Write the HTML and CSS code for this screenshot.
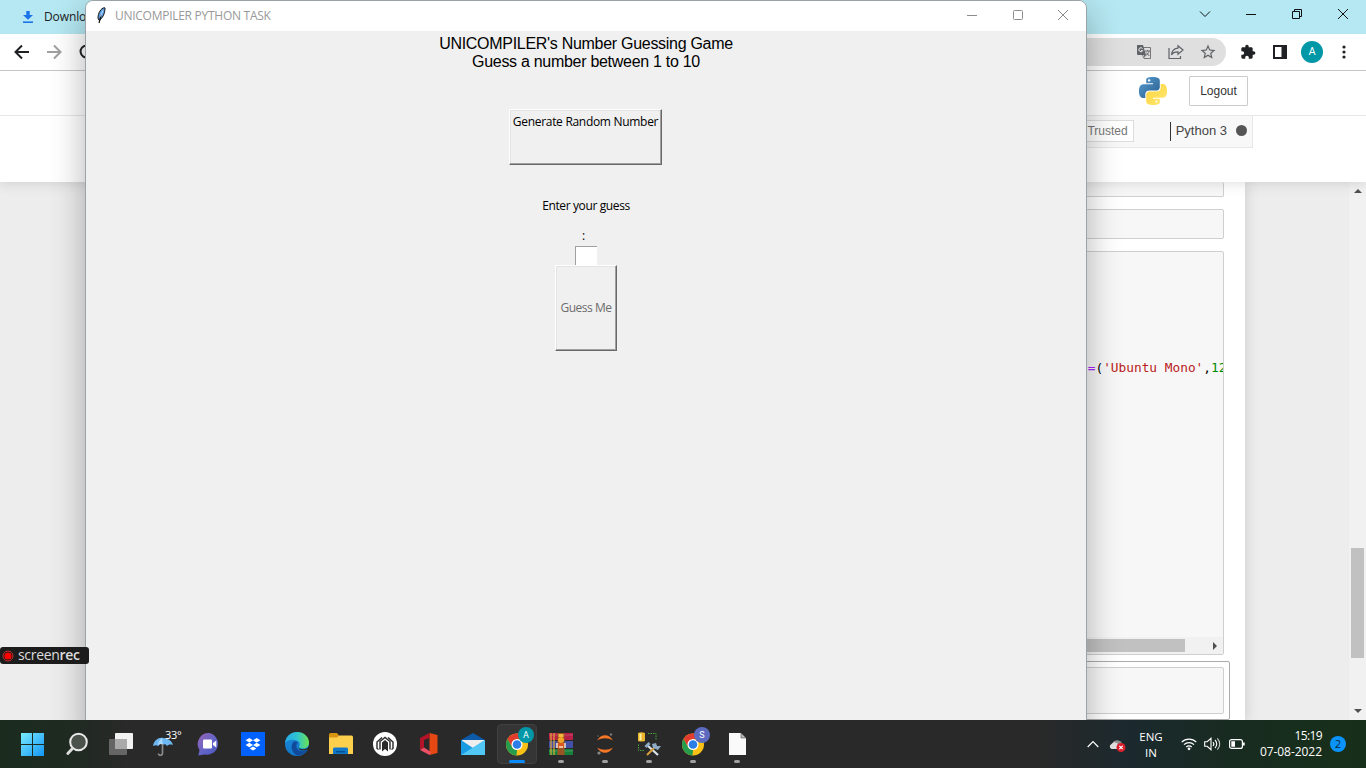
FILE: index.html
```html
<!DOCTYPE html>
<html lang="en">
<head>
<meta charset="utf-8">
<title>UNICOMPILER PYTHON TASK</title>
<link rel="stylesheet" href="styles.css">
</head>
<body>
<main class="desktop">
  <section class="browser">
    <header class="tabstrip">
      <div class="tab">
        <svg class="tab-icon" width="10" height="12" viewBox="0 0 10 12"><path d="M3.300 0h3.400v4H10L5 8.800 0 4h3.300z" fill="#1a73e8"/><path d="M0 10.400h10V12H0z" fill="#1a73e8"/></svg>
        <span class="tab-title">Downloads</span>
      </div>
      <div class="window-controls">
        <svg width="12" height="12" viewBox="0 0 12 12"><path d="M1 3.500l5 5 5-5" class="line"/></svg>
        <svg width="12" height="12" viewBox="0 0 12 12"><path d="M1 6.500h10" class="line"/></svg>
        <svg width="12" height="12" viewBox="0 0 12 12"><path d="M1.500 3.500h7v7h-7zM3.500 3.500v-2h7v7h-2" class="line"/></svg>
        <svg width="12" height="12" viewBox="0 0 12 12"><path d="M1 1l10 10M11 1L1 11" class="line"/></svg>
      </div>
    </header>
    <nav class="toolbar">
      <div class="nav-buttons">
        <svg width="20" height="20" viewBox="0 0 20 20"><path d="M17 10H4M10 3.500L3.500 10l6.500 6.500" fill="none" stroke="#202124" stroke-width="2"/></svg>
        <svg width="20" height="20" viewBox="0 0 20 20"><path d="M3 10h13M10 3.500L16.500 10 10 16.500" fill="none" stroke="#a0a0a2" stroke-width="2"/></svg>
        <svg width="20" height="20" viewBox="0 0 20 20"><path d="M15 5.500A6 6 0 1 0 16 12" fill="none" stroke="#202124" stroke-width="2"/></svg>
      </div>
      <div class="omnibox">
        <svg width="16" height="16" viewBox="0 0 16 16"><path d="M7 3.500h7.500v11H8L6.500 11" fill="none" stroke="#777" /><path d="M1 1h6l3 10H2a1 1 0 0 1-1-1z" fill="#5f6368"/><path d="M6.500 4.600a2 2 0 1 0 .2 2H5" fill="none" stroke="#eee"/><path d="M9 7h5M11.500 6v1M13 7c0 2-2 4-3 4M10.300 8.500l3 3.500" fill="none" stroke="#666"/><path d="M8 11l2 0-1.500 3z" fill="#5f6368"/></svg>
        <svg width="16" height="16" viewBox="0 0 16 16"><path d="M1 4v10.500h11.500V12" fill="none" stroke="#5f6368" stroke-width="1.200"/><path d="M10 1.800l5 4.200-5 4.200V7.800C7 7.700 5 8.500 3.500 10.800 4 7 6 4.500 10 4.200z" fill="none" stroke="#5f6368" stroke-width="1.200"/></svg>
        <svg width="18" height="18" viewBox="0 0 24 24"><path fill="#5f6368" d="M22 9.240l-7.190-.62L12 2 9.190 8.630 2 9.240l5.460 4.730L5.820 21 12 17.270 18.180 21l-1.630-7.030L22 9.240zM12 15.400l-3.760 2.270 1-4.280-3.320-2.880 4.380-.38L12 6.100l1.710 4.040 4.380.38-3.320 2.880 1 4.280L12 15.400z"/></svg>
      </div>
      <div class="extensions">
        <svg width="16" height="16" viewBox="0 0 24 24"><path fill="#202124" d="M20.500 11H19V7c0-1.100-.9-2-2-2h-4V3.500C13 2.120 11.880 1 10.500 1S8 2.120 8 3.500V5H4c-1.100 0-1.990.9-1.990 2v3.800H3.500c1.490 0 2.700 1.210 2.700 2.700s-1.210 2.700-2.700 2.700H2V20c0 1.100.9 2 2 2h3.800v-1.500c0-1.490 1.210-2.700 2.700-2.700 1.490 0 2.700 1.210 2.700 2.700V22H17c1.100 0 2-.9 2-2v-4h1.500c1.380 0 2.500-1.120 2.500-2.500S21.880 11 20.500 11z"/></svg>
        <svg width="16" height="16" viewBox="0 0 16 16"><path d="M2 2h12v12H2z" fill="#fff" stroke="#202124" stroke-width="2"/><path d="M9.500 2H14v12H9.500z" fill="#202124"/></svg>
        <span class="avatar">A</span>
        <svg width="4" height="16" viewBox="0 0 4 16"><g fill="#202124"><circle cx="2" cy="3" r="1.600"/><circle cx="2" cy="8" r="1.600"/><circle cx="2" cy="13" r="1.600"/></g></svg>
      </div>
    </nav>
    <div class="jupyter-head">
      <svg width="28" height="28" viewBox="0 0 24 24">
        <defs><linearGradient id="pyb" x2="1" y2="1"><stop stop-color="#5a9fd4"/><stop offset=".8" stop-color="#306998"/></linearGradient><linearGradient id="pyy" x2="1" y2="1"><stop stop-color="#ffd43b"/><stop offset="1" stop-color="#ffe873"/></linearGradient></defs>
        <path fill="url(#pyb)" d="M14.250.18l.9.2.73.26.59.3.45.32.34.34.25.34.16.33.1.3.04.26.02.2-.01.13V8.500l-.05.63-.13.55-.21.46-.26.38-.3.31-.33.25-.35.19-.35.14-.33.1-.3.07-.26.04-.21.02H8.770l-.69.05-.59.14-.5.22-.41.27-.33.32-.27.35-.2.36-.15.37-.1.35-.07.32-.04.27-.02.21v3.060H3.170l-.21-.03-.28-.07-.32-.12-.35-.18-.36-.26-.36-.36-.35-.46-.32-.59-.28-.73-.21-.88-.14-1.050-.05-1.230.06-1.220.16-1.040.24-.87.32-.71.36-.57.4-.44.42-.33.42-.24.4-.16.36-.1.32-.05.24-.01h.16l.06.01h8.160v-.83H6.180l-.01-2.750-.02-.37.05-.34.11-.31.17-.28.25-.26.31-.23.38-.2.44-.18.51-.15.58-.12.64-.1.71-.06.77-.04.84-.02 1.270.05zm-6.300 1.980l-.23.33-.08.41.08.41.23.34.33.22.41.09.41-.09.33-.22.23-.34.08-.41-.08-.41-.23-.33-.33-.22-.41-.09-.41.09z"/>
        <path fill="url(#pyy)" d="M21.040 6.110l.28.06.32.12.35.18.36.27.36.35.35.47.32.59.28.73.21.88.14 1.040.05 1.230-.06 1.230-.16 1.040-.24.86-.32.71-.36.57-.4.45-.42.33-.42.24-.4.16-.36.09-.32.05-.24.02-.16-.01h-8.220v.82h5.840l.01 2.760.02.36-.05.34-.11.31-.17.29-.25.25-.31.24-.38.2-.44.17-.51.15-.58.13-.64.09-.71.07-.77.04-.84.01-1.270-.04-1.070-.14-.9-.2-.73-.25-.59-.3-.45-.33-.34-.34-.25-.34-.16-.33-.1-.3-.04-.25-.02-.2.01-.13v-5.340l.05-.64.13-.54.21-.46.26-.38.3-.32.33-.24.35-.2.35-.14.33-.1.3-.06.26-.04.21-.02.13-.01h5.840l.69-.05.59-.14.5-.21.41-.28.33-.32.27-.35.2-.36.15-.36.1-.35.07-.32.04-.28.02-.21V6.070h2.090l.14.01z"/>
        <circle cx="15" cy="21" r="1" fill="#fff8d8"/>
      </svg>
      <button class="logout">Logout</button>
    </div>
    <div class="jupyter-menu">
      <div class="menu-inner">
        <span class="trusted">Trusted</span>
        <span class="kernel">Python 3</span>
        <i class="kernel-dot"></i>
      </div>
    </div>
    <div class="page">
      <div class="notebook">
        <div class="cell cell-a"></div>
        <div class="cell cell-b"></div>
        <div class="cell cell-c">
          <pre class="code"><span class="op">t=</span>(<span class="str">'Ubuntu Mono'</span>,<span class="num">12</span></pre>
          <div class="hscroll"><i class="hthumb"></i><svg width="4" height="8" viewBox="0 0 4 8"><path d="M0 0l4 4-4 4z" fill="#505050"/></svg></div>
        </div>
        <div class="selected"><div class="cell cell-d"></div></div>
      </div>
      <div class="vscroll">
        <svg width="8" height="4" viewBox="0 0 8 4"><path d="M0 4l4-4 4 4z" fill="#505050"/></svg>
        <i class="vthumb"></i>
        <svg width="8" height="4" viewBox="0 0 8 4"><path d="M0 0l4 4 4-4z" fill="#505050"/></svg>
      </div>
    </div>
  </section>

  <section class="tk">
    <header class="tk-title">
      <svg width="11" height="17" viewBox="0 0 11 17"><path d="M8.500.7C5 1 2 6 2 11l1 2.300C6 12 9 7 9 1z" fill="#5b9be0" stroke="#111" stroke-width="1"/><path d="M5.500 7L3 16" stroke="#111" stroke-width="1.200"/><path d="M7 3.500L4.500 9.500" stroke="#a9d2fa" stroke-width="1.200"/></svg>
      <span class="tk-name">UNICOMPILER PYTHON TASK</span>
      <div class="tk-controls">
        <svg width="12" height="12" viewBox="0 0 12 12"><path d="M1 6.500h10" class="grey"/></svg>
        <svg width="12" height="12" viewBox="0 0 12 12"><rect x="1.500" y="1.500" width="9" height="9" rx="1" class="grey"/></svg>
        <svg width="12" height="12" viewBox="0 0 12 12"><path d="M1 1l10 10M11 1L1 11" class="grey"/></svg>
      </div>
    </header>
    <div class="tk-body">
      <h1 class="heading">UNICOMPILER's Number Guessing Game<br>Guess a number between 1 to 10</h1>
      <button class="raised generate">Generate Random Number</button>
      <label class="label" for="guess">Enter your guess</label>
      <span class="colon">:</span>
      <input class="entry" id="guess">
      <button class="raised guess" disabled>Guess Me</button>
    </div>
  </section>

  <div class="screenrec">
    <svg width="12" height="12" viewBox="0 0 12 12"><circle cx="6" cy="6" r="5" fill="none" stroke="#e33" stroke-width=".8"/><circle cx="6" cy="6" r="3.600" fill="#f00"/></svg>
    <span class="rec-text">screen<b>rec</b></span>
  </div>
</main>

<footer class="taskbar">
  <div class="apps">
    <div class="app"><svg width="24" height="24" viewBox="0 0 24 24"><defs><linearGradient id="win" x2="1" y2="1" gradientUnits="userSpaceOnUse" x1="0" y1="0" gradientTransform="scale(24)"><stop stop-color="#7beefc"/><stop offset="1" stop-color="#1194f6"/></linearGradient></defs><path fill="url(#win)" d="M0 1h11v11H0zM12 1h11v11H12zM0 13h11v11H0zM12 13h11v11H12z"/></svg></div>
    <div class="app"><svg width="24" height="24" viewBox="0 0 24 24"><circle cx="13.500" cy="10" r="8.300" fill="#4b524c" stroke="#e9e9e9" stroke-width="2"/><path d="M7.500 16.500L2.800 21.500" stroke="#ddd" stroke-width="2.800" stroke-linecap="round"/></svg></div>
    <div class="app"><svg width="24" height="24" viewBox="0 0 24 24"><rect x="6" y="1" width="18" height="16" rx="1" fill="#f1f1f1"/><rect y="7" width="18" height="16" rx="1" fill="#656565"/><path d="M6 7h12v10H6z" fill="#aaa"/></svg></div>
    <div class="app"><svg width="24" height="24" viewBox="0 0 24 24"><path d="M0 14C1 8 6 5 10 6c5 0 9 3 10 7-3-1-5 0-6 1-1-2-3-2-4-1-2-2-4-1-5 1-1-1-3-1-5 0z" fill="#6db8f4"/><path d="M9 6c-3 2-4 5-4 8 1-2 3-3 5-1z" fill="#a9d8ff"/><path d="M9.500 12v9c0 3-4 3-4 .5" fill="none" stroke="#8b8b8b" stroke-width="1.700"/></svg><span class="temp">33°</span></div>
    <div class="app"><svg width="24" height="24" viewBox="0 0 24 24"><defs><linearGradient id="chat" x2="1" y2="1"><stop stop-color="#9a62b4"/><stop offset=".55" stop-color="#6264c7"/><stop offset="1" stop-color="#4b55be"/></linearGradient></defs><path d="M12.500 1a11 11 0 1 1-5 21.500L1.300 23.500 2.500 18A11 11 0 0 1 12.500 1z" fill="url(#chat)"/><rect x="6" y="7.500" width="9" height="9" rx="1" fill="#fff"/><path d="M16 11l3.300-2.500v7L16 13z" fill="#fff"/></svg></div>
    <div class="app"><svg width="24" height="24" viewBox="0 0 24 24"><path d="M0 0h24v24H0z" fill="#0061fe"/><path fill="#fff" d="M8.300 6l3.700 2.300-3.700 2.300-3.700-2.300zM15.700 6l3.700 2.300-3.700 2.300L12 8.300zM8.300 10.700L12 13l-3.700 2.300L4.600 13zM15.700 10.700l3.700 2.300-3.700 2.300L12 13zM12 14.500l3.300 2-3.300 2.100-3.300-2.100z"/></svg></div>
    <div class="app"><svg width="24" height="24" viewBox="0 0 24 24"><defs><linearGradient id="e1" x2="1"><stop stop-color="#28a9e8"/><stop offset=".5" stop-color="#2ec4d0"/><stop offset="1" stop-color="#6be352"/></linearGradient><linearGradient id="e2" y2="1" x2="0"><stop stop-color="#1b8ad8"/><stop offset="1" stop-color="#1277c9"/></linearGradient></defs><circle cx="12" cy="12" r="12" fill="url(#e2)"/><path d="M0 11C1 4 6 0 12 0c7 0 12 5 12 10.500 0 4-3 6-6 6s-4.500-1-4-2c2-3 0-6-4-6.500C6 7.500 2 8 0 11z" fill="url(#e1)"/><path d="M9 9.500c-4 3-3 11 3 14 4 0 8-2 10.500-5.500-6 3-12 0-11-5 .2-1.400 1-2 1.300-2.500-.8-.8-2.300-1.200-3.800-1z" fill="#114a9b"/><path d="M14 14.500c-1 2 2 4 8.500 1.700L24 14v5l-1.500-1.200c-5 2-10 0-8.500-3.300z" fill="#292929"/></svg></div>
    <div class="app"><svg width="24" height="24" viewBox="0 0 24 24"><path d="M0 2.500Q0 1 1.500 1H8l2 2.500V8H0z" fill="#d99410"/><path d="M0 5.500h8L10 3.500h12.500Q24 3.500 24 5v17H0z" fill="#fcd04c"/><path d="M4 22v-5q0-1.500 1.500-1.500h12q1.500 0 1.500 1.500v5z" fill="#1078c8"/><path d="M7 19h9v1.500H7z" fill="#064f91"/></svg></div>
    <div class="app"><svg width="24" height="24" viewBox="0 0 24 24"><circle cx="12" cy="12" r="12" fill="#fff"/><path d="M5.500 17.500l-1.500-1V10L9 5.500M15 5.500l5 4.500v6.500l-1.500 1" fill="none" stroke="#292929" stroke-width="1.400"/><path d="M7 17.500V9.500L12 5.500l5 4v8" fill="none" stroke="#292929" stroke-width="1.400"/><path d="M9 10.500L12 8l3 2.500V19.500L12 17l-3 2.500z" fill="#292929"/></svg></div>
    <div class="app"><svg width="24" height="24" viewBox="0 0 24 24"><path d="M12.500 1L20.500 3v18l-8 2z" fill="#e54812"/><path d="M12.500 1L3 6v12l4-2.500V8l5.500-2z" fill="#b31326"/><path d="M3 18l4-2.500 7 4.500-1.500 3z" fill="#ed4f67"/></svg></div>
    <div class="app"><svg width="24" height="24" viewBox="0 0 24 24"><path d="M0 8l12-7 12 7v5H0z" fill="#0c5aa8"/><path d="M1 8h22v6l-11 5L1 14z" fill="#eee"/><path d="M0 8l12 8L24 8v15H0z" fill="#199be2"/><path d="M0 23L24 8v15z" fill="#50c7f4"/></svg></div>
    <div class="app active"><svg width="24" height="24" viewBox="0 0 24 24"><g id="chrome"><circle cx="12" cy="12.500" r="11" fill="#fbc116"/><path d="M12 12.500V7h9.500a11 11 0 0 0-19 0L7 15z" fill="#e33b2e"/><path d="M2.500 7L7.200 15.200 12 18l-.5 5.500A11 11 0 0 1 2.500 7z" fill="#269c4d"/><path d="M12 23.500l5-8.500-5 3z" fill="#fbc116"/><circle cx="12" cy="12.500" r="5.500" fill="#fff"/><circle cx="12" cy="12.500" r="4.300" fill="#2b7de9"/></g></svg><span class="badge teal">A</span></div>
    <div class="app running"><svg width="24" height="24" viewBox="0 0 24 24"><path d="M0 1h24v7H0z" fill="#b71f47"/><path d="M0 9h24v7H0z" fill="#4450a5"/><path d="M0 17h24v6H0z" fill="#16803a"/><path d="M0 3h24M0 19h24" stroke="#fff" stroke-opacity=".2"/><path d="M2 1v22M5 1v22" stroke="#dfaa35" stroke-width="1.200"/><path d="M8.500 1h7v22h-7z" fill="#9a5422"/><path d="M9.500 2h5v3h-5z" fill="#f6b63b"/><circle cx="12" cy="8" r="3" fill="#f2a328"/><path d="M9 11h6v5H9z" fill="#d95a20"/><path d="M8 11v5M16 11v5M10 15h4" fill="none" stroke="#f6e4ca" stroke-width="1.500"/></svg></div>
    <div class="app running"><svg width="24" height="24" viewBox="0 0 24 24"><path d="M4 8.500C8 1.500 16 1.500 20 8.500 15 5.500 9 5.500 4 8.500zM4 15.500c4 7 12 7 16 0-5 3-11 3-16 0z" fill="#f37726"/><circle cx="18" cy="2.500" r="1.200" fill="#777"/><circle cx="6" cy="21" r="1.600" fill="#888"/><circle cx="5" cy="4" r=".8" fill="#666"/></svg></div>
    <div class="app running"><svg width="24" height="24" viewBox="0 0 24 24"><path d="M1 1q3.500-1.500 7 0v8q-3.500 1-7 0z" fill="#e9b52d"/><path d="M2.500 1.500h2v7h-2z" fill="#fff0a0"/><path d="M11 1.500h8v7M1.500 12.500v6h6" fill="none" stroke="#4ba33b" stroke-dasharray="1.500 1"/><path d="M10 13l11 10" stroke="#dce5ec" stroke-width="2.200"/><path d="M17 16L10 23" stroke="#d7a13b" stroke-width="2"/><path d="M7.500 14l4-4 2 2-4 4zM15 12l4-1 1 3 4 0-3 4-5-2z" fill="#8eaac4"/></svg></div>
    <div class="app running"><svg width="24" height="24" viewBox="0 0 24 24"><use href="#chrome"/></svg><span class="badge indigo">S</span></div>
    <div class="app running"><svg width="24" height="24" viewBox="0 0 24 24"><path d="M4 1h12l5 5v17H4z" fill="#fafafa"/><path d="M16 1v5h5z" fill="#bbb" stroke="#444" stroke-width=".6"/></svg></div>
  </div>
  <div class="tray">
    <svg class="caret" width="12" height="8" viewBox="0 0 12 8"><path d="M.7 7L6 1.500 11.300 7" fill="none" stroke="#fff" stroke-width="1.200"/></svg>
    <svg class="cloud" width="17" height="14" viewBox="0 0 17 14"><path d="M4 4a5 4 0 0 1 9 1v4H3z" fill="#8d8d8d"/><path d="M2.500 11a2.700 2.700 0 0 1 0-5 4 4 0 0 1 7 1v4z" fill="#ddd"/><circle cx="12" cy="9.500" r="4.500" fill="#d8202f"/><path d="M10.300 7.800l3.400 3.400M13.700 7.800l-3.400 3.400" stroke="#fff" stroke-width="1.200"/></svg>
    <div class="lang">ENG<br>IN</div>
    <svg class="wifi" width="16" height="14" viewBox="0 0 16 14"><g fill="none" stroke="#fff" stroke-width="1.200"><path d="M.7 5.200a10.300 10.300 0 0 1 14.600 0M3 7.700a7 7 0 0 1 10 0M5.300 10a3.800 3.800 0 0 1 5.400 0"/></g><circle cx="8" cy="11.800" r="1.400" fill="#fff"/></svg>
    <svg class="volume" width="17" height="14" viewBox="0 0 17 14"><g fill="none" stroke="#fff" stroke-width="1.100"><path d="M.7 4.700h2.500L7 1.300v11.400L3.200 9.300H.7zM9 5a3 3 0 0 1 0 4M11 3a5.500 5.500 0 0 1 0 8"/><path d="M13.300 1.300a8 8 0 0 1 0 11.400" stroke="#ccc"/></g></svg>
    <svg class="battery" width="16" height="10" viewBox="0 0 16 10"><rect x=".6" y=".6" width="12.800" height="8.800" rx="2" fill="none" stroke="#fff" stroke-width="1.200"/><path d="M2.300 2.300h3.700v5.400H2.300zM14 3.500h1.700v3H14z" fill="#fff"/></svg>
    <div class="clock"><span class="time">15:19</span><span>07-08-2022</span></div>
    <span class="count">2</span>
  </div>
</footer>
</body>
</html>
```
FILE: styles.css
```css
* { box-sizing: border-box; }
body {
  margin: 0;
  width: 1366px;
  height: 768px;
  overflow: hidden;
  display: flex;
  flex-direction: column;
  font-family: "Open Sans", "Noto Sans", sans-serif;
  font-size: 12px;
}
svg { display: block; flex: none; }
button, input { margin: 0; font: inherit; }
.line { fill: none; stroke: #111; stroke-width: 1; }
.grey { fill: none; stroke: #8c8c8c; stroke-width: 1; }

.desktop { position: relative; height: 720px; overflow: hidden; flex: none; }
.browser { isolation: isolate; height: 720px; display: flex; flex-direction: column; background: #fff; }

.tabstrip {
  height: 34px;
  flex: none;
  display: flex;
  justify-content: space-between;
  align-items: flex-start;
  background: #b5e8f2;
}
.tab { display: flex; align-items: center; gap: 11px; padding: 8px 0 0 23px; height: 26px; color: #202124; }
.tab-title { line-height: 18px; letter-spacing: -0.1px; }
.window-controls { display: flex; gap: 34px; padding: 8px 17px 0 0; }

.toolbar {
  height: 37px;
  flex: none;
  display: flex;
  align-items: center;
  border-bottom: 1px solid #c6c6c6;
}
.nav-buttons { display: flex; gap: 12px; padding-left: 12px; width: 200px; }
.omnibox {
  flex: 1;
  height: 28px;
  display: flex;
  align-items: center;
  justify-content: flex-end;
  gap: 16px;
  padding-right: 9px;
  border-radius: 14px;
  background: #dfdfdf;
}
.omnibox svg:nth-child(2) { margin-right: -1px; }
.extensions { width: 140px; display: flex; align-items: center; padding-left: 14px; }
.extensions svg + svg { margin-left: 16px; }
.avatar {
  width: 22px;
  height: 22px;
  margin: 0 19px 0 13px;
  border-radius: 50%;
  background: #0097a7;
  color: #fff;
  font: 11px/22px Roboto, sans-serif;
  text-align: center;
}

.jupyter-head {
  height: 45px;
  flex: none;
  display: flex;
  justify-content: flex-end;
  align-items: flex-start;
  gap: 22px;
  padding: 5px 118px 0 0;
  border-bottom: 1px solid #e7e7e7;
}
.jupyter-head svg { margin-top: 1px; }
.logout {
  width: 59px;
  height: 30px;
  padding: 0;
  border: 1px solid #ccc;
  border-radius: 1px;
  background: #fff;
  color: #333;
  font: 12px "Liberation Sans", sans-serif;
}
.jupyter-menu {
  height: 66px;
  flex: none;
  background: #fff;
  position: relative;
  z-index: 1;
  box-shadow: 0 0 12px 1px rgba(87, 87, 87, .2);
  clip-path: inset(0 0 -20px 0);
}
.menu-inner {
  width: 1140px;
  height: 32px;
  margin-left: 113px;
  display: flex;
  justify-content: flex-end;
  align-items: flex-start;
  padding: 4px 5px 0 0;
  background: #f8f8f8;
  border: solid #e7e7e7;
  border-width: 0 1px 1px 0;
  font-family: "Liberation Sans", sans-serif;
}
.trusted { border: 1px solid #ddd; background: #fff; color: #777; height: 22px; line-height: 20px; padding: 0 5px; margin-right: 36px; }
.kernel { border-left: 1px solid #333; height: 19px; margin-top: 2px; padding-left: 5px; font-size: 13px; line-height: 17px; color: #444; white-space: nowrap; }
.kernel-dot { width: 11px; height: 11px; border-radius: 50%; background: #555; margin: 5px 0 0 9px; }

.page { flex: 1; display: flex; justify-content: space-between; background: #ededed; overflow: hidden; }
.notebook {
  width: 1140px;
  margin-left: 105px;
  padding-right: 15px;
  background: #fff;
  box-shadow: 0 0 12px 1px rgba(87, 87, 87, .2);
}
.cell { margin-right: 6px; border: 1px solid #cfcfcf; border-radius: 2px; background: #f7f7f7; }
.cell-a { height: 15px; border-top: 0; }
.cell-b { height: 30px; margin-top: 12px; }
.cell-c { height: 404px; margin-top: 12px; display: flex; flex-direction: column; justify-content: space-between; overflow: hidden; }
.code {
  margin: 107px 0 0 974px;
  font: 12.8px/17px "DejaVu Sans Mono", monospace;
  color: #000;
}
.op { color: #a2f; }
.str { color: #ba2121; }
.num { color: #080; }
.hscroll { height: 17px; display: flex; align-items: center; justify-content: space-between; padding-right: 6px; background: #f1f1f1; }
.hthumb { width: 1079px; height: 13px; background: #c1c1c1; }
.selected { height: 59px; margin-top: 6px; padding: 5px 5px 0; border: 1px solid #ababab; border-radius: 2px; }
.selected .cell { margin-right: 0; }
.cell-d { height: 47px; }
.vscroll { width: 17px; display: flex; flex-direction: column; align-items: center; background: #f1f1f1; padding: 7px 0; }
.vthumb { width: 13px; height: 110px; margin: 355px 0 51px; background: #c1c1c1; flex: none; }

.tk {
  position: absolute;
  left: 85px;
  top: 0;
  width: 1002px;
  height: 740px;
  border: 1px solid #9aa3a5;
  border-radius: 8px;
  background: #f0f0f0;
  box-shadow: 0 12px 34px rgba(0, 0, 0, .3);
  overflow: hidden;
}
.tk-title { height: 30px; display: flex; align-items: center; background: #fff; padding: 0 0 2px 10px; }
.tk-name { margin-left: 8px; color: #999; letter-spacing: -0.27px; white-space: nowrap; }
.tk-controls { margin-left: auto; display: flex; gap: 33.500px; padding-right: 17px; }
.tk-body { display: flex; flex-direction: column; align-items: center; padding-top: 4px; }
.heading { margin: 0; font: 16px/18px "Liberation Sans", Arial, sans-serif; color: #000; text-align: center; white-space: nowrap; letter-spacing: -0.29px; }
.raised {
  padding: 0;
  background: #f0f0f0;
  border: 1px solid;
  border-color: #fff #696969 #696969 #fff;
  box-shadow: inset -1px -1px #a0a0a0, inset 1px 1px #e3e3e3;
  white-space: nowrap;
  color: #000;
}
.generate { width: 153px; height: 56px; margin: 38px 1px 0 0; padding-bottom: 31px; line-height: 16px; letter-spacing: -0.3px; }
.label { margin-top: 33px; line-height: 16px; letter-spacing: -0.38px; }
.colon { margin: 14px 0 0 -5px; line-height: 16px; }
.entry { width: 22px; height: 19px; margin-top: 2px; padding: 0; border: solid #a0a0a0; border-width: 1px 0 0 1px; border-radius: 0; background: #fff; }
.guess { width: 62px; height: 86px; padding-bottom: 2px; color: #6d6d6d; letter-spacing: -0.5px; }

.screenrec {
  position: absolute;
  left: 0;
  top: 647px;
  width: 89px;
  height: 17px;
  display: flex;
  align-items: center;
  gap: 4px;
  padding-left: 2px;
  border-radius: 3px;
  background: #1c1c1c;
  color: #ddd;
}
.rec-text { font-size: 14px; line-height: 15px; padding-bottom: 2px; letter-spacing: -0.3px; white-space: nowrap; }
.rec-text b { font-weight: 600; }

.taskbar {
  height: 48px;
  flex: none;
  display: flex;
  justify-content: space-between;
  color: #fff;
  background: linear-gradient(90deg, #1b2c1f 0, #1f2a21 70px, #292929 130px, #292929 1040px, #1b292e 1130px, #182b20 1230px, #17301a 1366px);
}
.apps { display: flex; padding-left: 11px; }
.app { position: relative; width: 44px; height: 48px; display: flex; align-items: center; justify-content: center; }
.app svg { position: relative; }
.active::before { content: ""; position: absolute; inset: 4px 2px; border: 1px solid #404040; border-radius: 4px; background: #353535; }
.running::after, .active::after { content: ""; position: absolute; left: 19px; bottom: 5px; width: 6px; height: 3px; border-radius: 2px; background: #a0a0a0; }
.active::after { left: 14px; width: 16px; background: #0a8bfa; }
.temp { position: absolute; left: 22px; top: 7px; font-size: 11px; line-height: 16px; letter-spacing: -0.3px; }
.badge { position: absolute; left: 23px; top: 7px; width: 16px; height: 16px; border-radius: 50%; font: 9px/16px Roboto, sans-serif; text-align: center; }
.teal { background: #0097a7; }
.indigo { background: #5c6bc0; }

.tray { display: flex; align-items: center; padding-right: 20px; }
.cloud { margin: 2px 0 0 10px; }
.lang { width: 30px; margin: 1px 0 0 10px; text-align: center; line-height: 16px; font-size: 11.5px; }
.wifi { margin-left: 15px; }
.volume { margin-left: 7px; }
.battery { margin-left: 8px; }
.clock { width: 77px; display: flex; flex-direction: column; align-items: flex-end; line-height: 16px; font-size: 12px; letter-spacing: -0.05px; white-space: nowrap; }
.time { letter-spacing: -0.6px; }
.count { width: 16px; height: 16px; margin-left: 8px; border-radius: 50%; background: #0a93fa; color: #06243c; font-size: 10.5px; line-height: 16px; text-align: center; }
```
